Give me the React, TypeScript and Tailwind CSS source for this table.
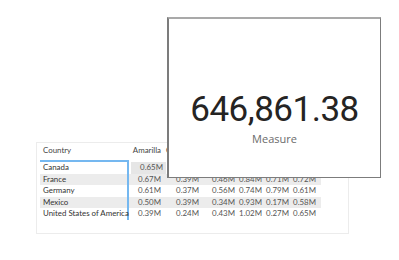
import React from "react";

const rows = [
    { country: "Canada", values: ["0.65M", "0.39M", "0.46M", "0.84M", "0.71M", "0.72M"] },
    { country: "France", values: ["0.67M", "0.39M", "0.46M", "0.84M", "0.71M", "0.72M"] },
    { country: "Germany", values: ["0.61M", "0.37M", "0.56M", "0.74M", "0.79M", "0.61M"] },
    { country: "Mexico", values: ["0.50M", "0.39M", "0.34M", "0.93M", "0.17M", "0.58M"] },
    { country: "United States of America", values: ["0.39M", "0.24M", "0.43M", "1.02M", "0.27M", "0.65M"] },
];

const colWidths = ["w-[35px]", "w-[38px]", "w-[36px]", "w-[27px]", "w-[27px]", "w-[27px]"];

const App: React.FC = () => {
    return (
        <div className="relative w-[399px] h-[260px] bg-white overflow-hidden font-['Lato',sans-serif]">
            {/* Matrix table */}
            <div className="absolute left-[36px] top-[142px] w-[313px] h-[92px] border border-[#ececec] pl-[3px]">
                <div className="flex items-center h-[17px] pb-[2px] text-[7.9px] text-[#444]">
                    <div className="w-[89px] pl-[3px]">Country</div>
                    <div className="w-[35px] text-right pr-[3px]">Amarilla</div>
                    <div className="w-[38px] pl-[2px]">Cereza</div>
                </div>
                <div className="flex w-[279px]">
                    <div className="w-[89px] border-t-2 border-r-2 border-[#75b8f0]">
                        {rows.map((r, i) => (
                            <div
                                key={r.country}
                                className={`h-[11.5px] leading-[11.5px] pl-[3px] text-[7.9px] text-[#333] whitespace-nowrap ${
                                    i % 2 === 1 ? "bg-[#ececec]" : ""
                                }`}
                            >
                                {r.country}
                            </div>
                        ))}
                    </div>
                    <div className="flex-1 border-t-2 border-transparent">
                        {rows.map((r, i) => (
                            <div
                                key={r.country}
                                className={`flex h-[11.5px] leading-[11.5px] text-[7.9px] text-[#555] ${
                                    i % 2 === 1 ? "bg-[#ececec]" : ""
                                }`}
                            >
                                {r.values.map((v, j) => (
                                    <div
                                        key={j}
                                        className={`${colWidths[j]} text-right pr-[3px] ${
                                            i === 0 && j === 0 ? "bg-[#e6e6e6] ml-[2px]" : ""
                                        }`}
                                    >
                                        {v}
                                    </div>
                                ))}
                            </div>
                        ))}
                    </div>
                </div>
            </div>

            {/* Card visual */}
            <div className="absolute left-[167px] top-[17px] w-[214px] h-[161px] bg-white border border-[#7c7c7c] border-t-[#a9a9a9] border-l-2 border-t-2 flex flex-col items-center pt-[73px]">
                <div className="text-[35px] leading-[36px] tracking-[-0.5px] text-[#252423] font-['Roboto',sans-serif]">
                    646,861.38
                </div>
                <div className="mt-[4px] text-[11px] leading-[14px] text-[#6b6b6b] font-['Open_Sans',sans-serif]">
                    Measure
                </div>
            </div>
        </div>
    );
};

export default App;
